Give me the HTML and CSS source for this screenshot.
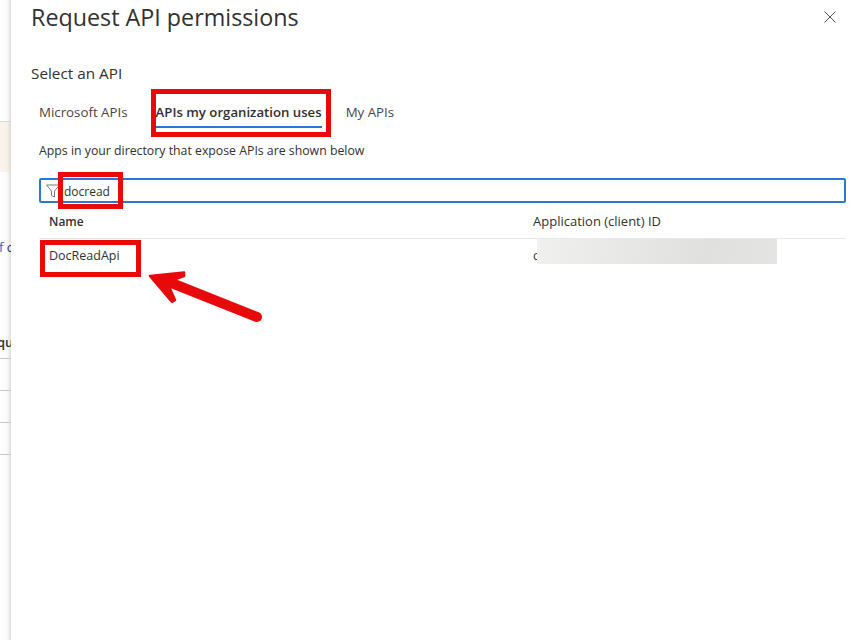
FILE: index.html
```html
<!DOCTYPE html>
<html lang="en">
<head>
    <meta charset="UTF-8">
    <title>Request API permissions</title>
    <link rel="stylesheet" href="styles.css">
</head>
<body>
    <div class="container">
        <!-- Page behind the blade, only a sliver shows -->
        <div class="backdrop">
            <div class="notice"></div>
            <div class="cut-text link-text"><span class="blue">f</span> c</div>
            <div class="cut-text bold-text">qu</div>
            <div class="back-row"></div>
            <div class="back-row"></div>
            <div class="back-row"></div>
            <div class="back-row"></div>
        </div>

        <div class="panel">
            <div class="panel-header">
                <h1>Request API permissions</h1>
                <svg class="close" width="12" height="12" viewBox="0 0 12 12">
                    <path d="M0.5 0.5L11.5 11.5M11.5 0.5L0.5 11.5" stroke="#555" stroke-width="1" fill="none"/>
                </svg>
            </div>

            <div class="select-label">Select an API</div>

            <div class="tabs">
                <a class="tab first">Microsoft APIs</a>
                <a class="tab active">APIs my organization uses</a>
                <a class="tab">My APIs</a>
            </div>

            <div class="body">
                <p class="hint">Apps in your directory that expose APIs are shown below</p>

                <div class="search">
                    <svg class="filter-icon" width="14" height="14" viewBox="0 0 14 14">
                        <path d="M0.5 1H13.5L8.5 7V13L5.5 11.5V7Z" stroke="#777" stroke-width="1" fill="none"/>
                    </svg>
                    <span>docread</span>
                </div>

                <table class="api-table">
                    <thead>
                        <tr>
                            <th class="name-col">Name</th>
                            <th>Application (client) ID</th>
                        </tr>
                    </thead>
                    <tbody>
                        <tr>
                            <td>DocReadApi</td>
                            <td>c<span class="blur"></span></td>
                        </tr>
                    </tbody>
                </table>
            </div>
        </div>
    </div>

    <!-- Red annotations drawn on top of the screenshot -->
    <div class="mark mark-tab"></div>
    <div class="mark mark-search"></div>
    <div class="mark mark-row"></div>
    <svg class="arrow" width="130" height="62" viewBox="0 0 130 62">
        <path d="M10 14L44 10.5L44 14L27 20L35 38L32 40Z" fill="#e80a0a" stroke="#e80a0a" stroke-width="2.5" stroke-linejoin="round"/>
        <path d="M24 18L117 55" stroke="#e80a0a" stroke-width="10" stroke-linecap="round" fill="none"/>
    </svg>
</body>
</html>
```

FILE: styles.css
```css
* {
    margin: 0;
    padding: 0;
    box-sizing: border-box;
}

body {
    font-family: "Open Sans", "Noto Sans", sans-serif;
    background: #fff;
    color: #323130;
    width: 852px;
    height: 640px;
    overflow: hidden;
    position: relative;
}

.container {
    display: flex;
    height: 640px;
}

/* Sliver of the page behind the blade */
.backdrop {
    width: 11px;
    flex-shrink: 0;
    padding-top: 121px;
    overflow: hidden;
    background: linear-gradient(90deg, #fff 0, #fafafa 7px, #dedede 11px);
}

.notice {
    height: 51px;
    border-top: 1px solid #d8d8d8;
    background: linear-gradient(90deg, #fbf3ec 0, #f8f1ea 7px, #e0dad5 11px);
}

.cut-text {
    font-size: 13px;
    line-height: 18px;
    white-space: nowrap;
    width: 11px;
}

.link-text {
    margin-top: 66px;
    margin-left: -1px;
}

.blue {
    color: #0f6cbd;
}

.bold-text {
    margin-top: 77px;
    margin-left: -3px;
    font-weight: 600;
}

.back-row {
    height: 32px;
    border-top: 1px solid #c8c8c8;
}

.bold-text + .back-row {
    margin-top: 7px;
}

.panel {
    flex: 1;
    padding-left: 20px;
    padding-right: 6px;
}

.panel-header {
    display: flex;
    justify-content: space-between;
    align-items: flex-start;
    height: 64px;
}

.panel-header h1 {
    font-size: 23.3px;
    font-weight: 400;
    line-height: 34px;
    color: #323130;
}

.close {
    margin-top: 11px;
    margin-right: 10px;
}

.select-label {
    font-size: 15.3px;
    line-height: 18px;
}

/* Tabs */
.tabs {
    display: flex;
    gap: 24px;
    margin-top: 9px;
    padding-left: 8px;
}

.tab {
    font-size: 13.3px;
    line-height: 18px;
    height: 37px;
    padding-top: 12px;
    color: #484644;
}

.tab.first {
    margin-right: 4px;
}

.tab.active {
    font-size: 13.2px;
    font-weight: 600;
    color: #323130;
    border-bottom: 2px solid #2b78d4;
}

.body {
    padding-left: 8px;
}

.hint {
    font-size: 12.3px;
    line-height: 16px;
    margin-top: 15px;
}

.search {
    display: flex;
    align-items: center;
    gap: 4px;
    height: 25px;
    margin-top: 19px;
    padding-left: 5px;
    padding-top: 1px;
    border: 2px solid #2b78d4;
    border-radius: 2px;
    font-size: 12px;
}

.api-table {
    width: 100%;
    border-collapse: collapse;
    table-layout: fixed;
    font-size: 13px;
}

.api-table th {
    height: 35px;
    padding-top: 2px;
    font-weight: 400;
    text-align: left;
    border-bottom: 1px solid #e8e8e8;
}

.api-table th.name-col {
    width: 494px;
    padding-left: 10px;
    font-size: 12px;
    font-weight: 600;
}

.api-table td {
    height: 34px;
    vertical-align: top;
    padding-top: 9px;
    font-size: 12.5px;
    line-height: 16px;
    position: relative;
}

.api-table td:first-child {
    padding-left: 10px;
}

.blur {
    position: absolute;
    left: 4px;
    top: 0;
    width: 240px;
    height: 25px;
    background: linear-gradient(100deg, #f0f0ee, #e0e0df 70%, #e4e4e3);
}

/* Red annotation boxes */
.mark {
    position: absolute;
    border: 5px solid #e80a0a;
}

.mark-tab {
    left: 151px;
    top: 89px;
    width: 180px;
    height: 48px;
}

.mark-search {
    left: 58px;
    top: 172px;
    width: 65px;
    height: 37px;
}

.mark-row {
    left: 40px;
    top: 240px;
    width: 101px;
    height: 37px;
}

.arrow {
    position: absolute;
    left: 140px;
    top: 262px;
}
```
